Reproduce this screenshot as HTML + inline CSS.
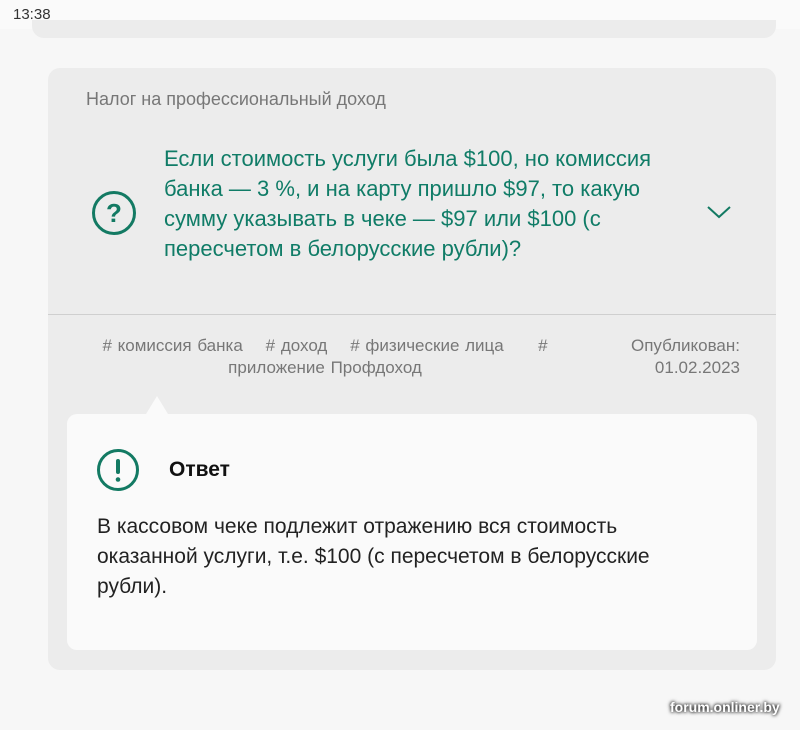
<!DOCTYPE html>
<html><head><meta charset="utf-8"><style>
body{margin:0;width:800px;height:730px;background:#f7f7f7;font-family:"Liberation Sans",sans-serif;position:relative;overflow:hidden}
.sb{position:absolute;left:0;top:0;width:800px;height:29px;background:#fafafa}
.time{position:absolute;left:13px;top:6px;font-size:15px;color:#333}
.topcard{position:absolute;left:32px;top:20px;width:744px;height:18px;background:#ececec;border-radius:0 0 12px 12px}
.card{position:absolute;left:48px;top:68px;width:728px;height:602px;background:#ececec;border-radius:12px}
.cat{position:absolute;left:38px;top:21px;font-size:18px;color:#777}
.q{position:absolute;left:116px;top:76px;width:540px;font-size:22px;line-height:30px;color:#107c67}
.line{position:absolute;left:0;top:246px;width:728px;height:1px;background:#cfcfcf}
.tags{position:absolute;left:47px;top:267px;width:460px;font-size:17px;line-height:22px;color:#777;text-align:center;word-spacing:1px}
.pub{position:absolute;right:36px;top:267px;font-size:17px;line-height:22px;color:#777;text-align:right}
.ans{position:absolute;left:19px;top:346px;width:690px;height:236px;background:#fafafa;border-radius:10px}
.notch{position:absolute;left:98px;top:328px;width:0;height:0;border-left:11px solid transparent;border-right:11px solid transparent;border-bottom:18px solid #fafafa}
.at{position:absolute;left:102px;top:44px;font-size:21px;font-weight:bold;color:#111}
.ab{position:absolute;left:30px;top:98px;width:600px;font-size:21px;line-height:30px;color:#222}
.wm{position:absolute;left:670px;top:699px;font-size:14px;font-weight:bold;color:#fff;text-shadow:0 0 3px #000,0 0 4px #555}
</style></head><body>
<div class="sb"><div class="time">13:38</div></div>
<div class="topcard"></div>
<div class="card">
<div class="cat">Налог на профессиональный доход</div>
<svg style="position:absolute;left:43px;top:122px" width="46" height="46" viewBox="0 0 46 46"><circle cx="23" cy="23" r="20.5" fill="none" stroke="#137a63" stroke-width="3"/><text x="23" y="32" font-family="Liberation Sans" font-weight="bold" font-size="26" fill="#137a63" text-anchor="middle">?</text></svg>
<div class="q">Если стоимость услуги была $100, но комиссия банка — 3 %, и на карту пришло $97, то какую сумму указывать в чеке — $97 или $100 (с пересчетом в белорусские рубли)?</div>
<svg style="position:absolute;left:658px;top:136px" width="26" height="16" viewBox="0 0 26 16"><path d="M2 3 L13 13 L24 3" fill="none" stroke="#137a63" stroke-width="2"/></svg>
<div class="line"></div>
<div class="tags"># комиссия банка &nbsp;&nbsp;&nbsp;# доход &nbsp;&nbsp;&nbsp;# физические лица &nbsp;&nbsp;&nbsp;&nbsp;&nbsp;#<br>приложение Профдоход</div>
<div class="pub">Опубликован:<br>01.02.2023</div>
<div class="notch"></div>
<div class="ans">
<svg style="position:absolute;left:29px;top:34px" width="44" height="44" viewBox="0 0 44 44"><circle cx="22" cy="22" r="19.5" fill="none" stroke="#137a63" stroke-width="3"/><rect x="20" y="11" width="4" height="15" rx="2" fill="#137a63"/><circle cx="22" cy="31.5" r="2.3" fill="#137a63"/></svg>
<div class="at">Ответ</div>
<div class="ab">В кассовом чеке подлежит отражению вся стоимость оказанной услуги, т.е. $100 (с пересчетом в белорусские рубли).</div>
</div>
</div>
<div class="wm">forum.onliner.by</div>
</body></html>
